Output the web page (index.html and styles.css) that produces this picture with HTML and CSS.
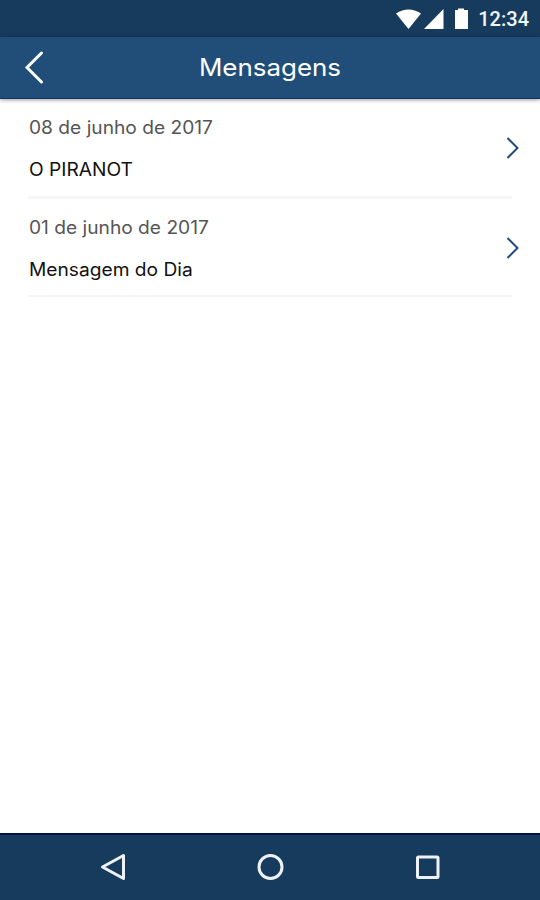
FILE: index.html
```html
<!DOCTYPE html>
<html lang="pt-BR">
<head>
  <meta charset="UTF-8">
  <meta name="viewport" content="width=device-width,initial-scale=1">
  <title>Mensagens</title>
  <link rel="stylesheet" href="styles.css">
</head>
<body>
  <div class="screen">
    <div class="status-bar">
      <svg class="status-icons" width="76" height="24" viewBox="0 0 76 24" fill="#fff">
        <path d="M1 6.500Q13.500 -1.500 26 6.500L13.500 22Z"/>
        <path d="M48.500 2V22H29Z"/>
        <path d="M60 3h3V1.500h6V3h4v19H60Z"/>
      </svg>
      <span class="clock">12:34</span>
    </div>

    <header class="header">
      <a class="back" href="#" aria-label="Voltar">
        <svg width="20" height="36" viewBox="0 0 20 36"><path d="M17.500 3L3 17.500L17.500 32" fill="none" stroke="#fff" stroke-width="3" stroke-linecap="round"/></svg>
      </a>
      <h1>Mensagens</h1>
    </header>

    <main class="messages">
      <a class="message" href="#">
        <div class="text">
          <span class="date">08 de junho de 2017</span>
          <span class="subject">O PIRANOT</span>
        </div>
        <svg class="arrow" width="14" height="24" viewBox="0 0 14 24"><path d="M1.500 2L11.500 12L1.500 22" fill="none" stroke="#204a7e" stroke-width="2"/></svg>
      </a>
      <a class="message" href="#">
        <div class="text">
          <span class="date">01 de junho de 2017</span>
          <span class="subject">Mensagem do Dia</span>
        </div>
        <svg class="arrow" width="14" height="24" viewBox="0 0 14 24"><path d="M1.500 2L11.500 12L1.500 22" fill="none" stroke="#204a7e" stroke-width="2"/></svg>
      </a>
    </main>

    <nav class="nav-bar">
      <svg width="28" height="30" viewBox="0 0 28 30"><path d="M24.500 3.500V26.500L3.500 15Z"/></svg>
      <svg width="28" height="30" viewBox="0 0 28 30"><circle cx="13.500" cy="15" r="11.500"/></svg>
      <svg width="28" height="30" viewBox="0 0 28 30"><rect x="3.500" y="5" width="20.500" height="20.500" rx="1"/></svg>
    </nav>
  </div>
</body>
</html>
```

FILE: styles.css
```css
* { box-sizing: border-box; }
body { margin: 0; background: #fff; font-family: Inter, "Liberation Sans", sans-serif; }
a { color: inherit; text-decoration: none; }
svg { display: block; }
.screen { display: flex; flex-direction: column; height: 900px; overflow: hidden; }

.status-bar { display: flex; align-items: center; justify-content: flex-end; height: 37px; padding-right: 11px; background: #173b5c; color: #f1f5f8; }
.status-icons { margin-right: 7px; }
.clock { font-family: Roboto, sans-serif; font-size: 20px; font-weight: 500; line-height: 24px; }

.header { display: grid; grid-template-columns: 100px 1fr 100px; align-items: center; height: 62px; background: #204e79; border-bottom: 1px solid #103560; box-shadow: 0 1px 4px rgba(0,0,0,.4); color: #fff; z-index: 1; }
.back { padding-left: 24px; }
h1 { margin: 0; text-align: center; font-size: 24px; font-weight: 400; transform: scaleX(1.08); }

.messages { flex: 1; padding: 0 20px 0 28px; }
.message { display: flex; justify-content: space-between; height: 100px; }
.message + .message { height: 98px; }
.text { display: flex; flex-direction: column; align-items: flex-start; flex: 1; margin-right: -6px; padding: 17px 0 0 1px; border-bottom: 3px solid #f7f7f7; }
.message + .message .text { border-bottom: 2px solid #f5f5f5; }
/* widened letterforms */
.date, .subject { font-size: 18px; line-height: 24px; transform: scaleX(1.065); transform-origin: left; }
.date { color: #555; }
.subject { margin-top: 18px; color: #111; }
.arrow { margin-top: 37px; }

.nav-bar { display: flex; justify-content: space-between; height: 67px; padding: 17px 98px 0 99px; background: #173b5c; border-top: 2px solid #06124e; }
.nav-bar svg { fill: none; stroke: #eef2f7; stroke-width: 3; stroke-linejoin: round; }
```
